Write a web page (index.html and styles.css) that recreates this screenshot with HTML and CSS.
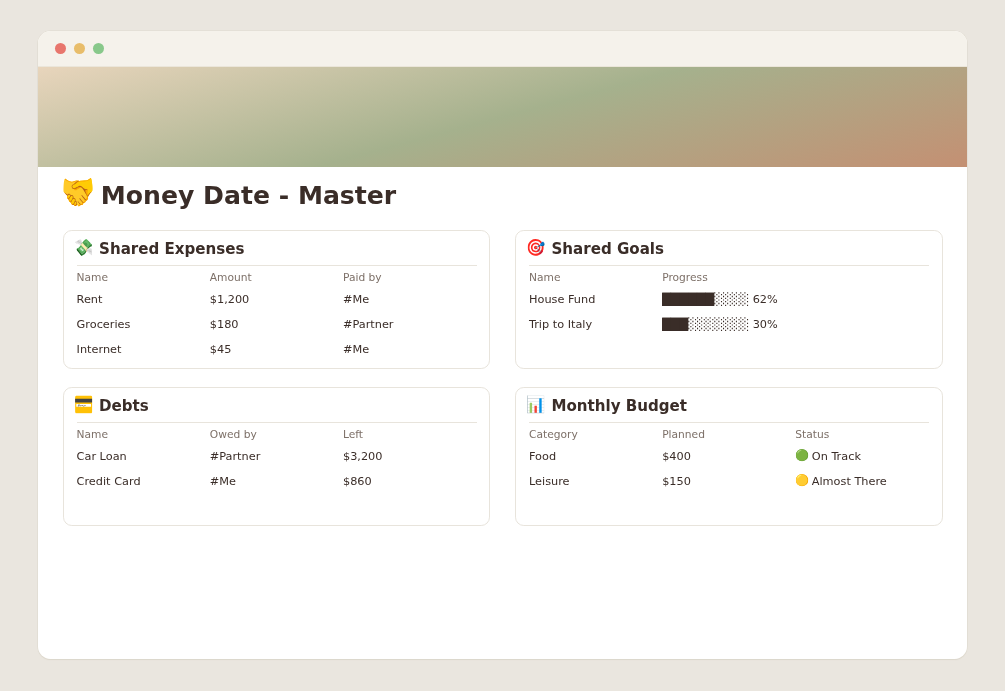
FILE: index.html
```html
<!DOCTYPE html>
<html lang="en">
<head>
<meta charset="utf-8">
<title>Money Date - Master</title>
<link rel="stylesheet" href="styles.css">
</head>
<body>
<main class="window">
  <div class="titlebar"><i class="dot red"></i><i class="dot amber"></i><i class="dot green"></i></div>
  <div class="cover"></div>
  <h1 class="title"><span class="title-icon">🤝</span><span>Money Date - Master</span></h1>
  <div class="cards">
    <section class="card">
      <h2 class="card-title"><span class="icon">💸</span><span>Shared Expenses</span></h2>
      <div class="row head"><span>Name</span><span>Amount</span><span>Paid by</span></div>
      <div class="row"><span>Rent</span><span>$1,200</span><span>#Me</span></div>
      <div class="row"><span>Groceries</span><span>$180</span><span>#Partner</span></div>
      <div class="row"><span>Internet</span><span>$45</span><span>#Me</span></div>
    </section>
    <section class="card">
      <h2 class="card-title"><span class="icon">🎯</span><span>Shared Goals</span></h2>
      <div class="row head"><span>Name</span><span>Progress</span></div>
      <div class="row"><span>House Fund</span><span><span class="filled">██████</span>░░░░ 62%</span></div>
      <div class="row"><span>Trip to Italy</span><span><span class="filled">███</span>░░░░░░░ 30%</span></div>
    </section>
    <section class="card">
      <h2 class="card-title"><span class="icon wide">💳</span><span>Debts</span></h2>
      <div class="row head"><span>Name</span><span>Owed by</span><span>Left</span></div>
      <div class="row"><span>Car Loan</span><span>#Partner</span><span>$3,200</span></div>
      <div class="row"><span>Credit Card</span><span>#Me</span><span>$860</span></div>
    </section>
    <section class="card">
      <h2 class="card-title"><span class="icon">📊</span><span>Monthly Budget</span></h2>
      <div class="row head"><span>Category</span><span>Planned</span><span>Status</span></div>
      <div class="row"><span>Food</span><span>$400</span><span class="status"><span class="status-icon">🟢</span><span>On Track</span></span></div>
      <div class="row"><span>Leisure</span><span>$150</span><span class="status"><span class="status-icon">🟡</span><span>Almost There</span></span></div>
    </section>
  </div>
</main>
</body>
</html>
```
FILE: styles.css
```css
* { box-sizing: border-box; }
body {
  margin: 0;
  height: 691px;
  padding: 31.4px 37.7px;
  overflow: hidden;
  background: #eae6df;
  color: #3a2d28;
  font-family: "DejaVu Sans", "Noto Color Emoji", sans-serif;
}
.window {
  height: 628px;
  overflow: hidden;
  background: #fff;
  border-radius: 12.5px;
  box-shadow: 0 0 0 0.6px #e0dbd0, 0 1px 1px #d9d3c8;
  opacity: 0.999;
  will-change: opacity;
}
.titlebar {
  height: 35.2px;
  display: flex;
  align-items: center;
  gap: 7.9px;
  padding: 0 17.3px;
  background: #f5f2eb;
  border-bottom: 1px solid #ebe6da;
}
.dot { width: 11px; height: 11px; border-radius: 50%; }
.red { background: #e8766d; }
.amber { background: #e8bd6a; }
.green { background: #88c88a; }
.cover {
  height: 100.4px;
  background: linear-gradient(165deg, #e8d5bc 0%, #a5b18d 50%, #c49073 100%);
}
.title {
  display: flex;
  align-items: center;
  height: 63.5px;
  margin: 0;
  padding: 0 25.1px 4.6px;
  font-size: 25.13px;
  line-height: 30px;
}
.title-icon { width: 38px; font-weight: 400; margin-top: -8px; transform: translate(-0.4px, 0.5px) scale(1.08, 1.5); transform-origin: 15px 15px; }
.cards {
  display: grid;
  grid-template-columns: 427.6px 427.6px;
  grid-auto-rows: 138.2px;
  gap: 18.8px 24.8px;
  padding: 0 25.1px;
}
.card {
  border: 1px solid #e8e4dc;
  border-radius: 8.8px;
  padding: 0 12.8px;
}
.card-title {
  display: flex;
  align-items: center;
  height: 34.5px;
  margin: 0;
  padding-top: 2px;
  border-bottom: 1px solid #e8e4dc;
  font-size: 15.08px;
  line-height: 20px;
}
.icon { width: 24px; margin-left: -2px; margin-right: 0.5px; font-weight: 400; margin-top: -4px; transform: translate(-0.2px, 1px) scale(1.03, 1.08); transform-origin: 9px 10px; }
.wide { transform: translate(-0.2px, 1px) scale(1.03, 1.65); }
.row {
  display: grid;
  grid-template-columns: repeat(3, 133.2px);
  height: 25px;
  font-size: 11.31px;
  line-height: 25px;
  white-space: nowrap;
}
.head {
  height: 20.9px;
  line-height: 24.6px;
  font-size: 10.68px;
  color: #7d7068;
}
.filled { background: #3a2d28; }
.status { display: flex; }
.status-icon { width: 16.4px; margin-top: -1px; }
```
